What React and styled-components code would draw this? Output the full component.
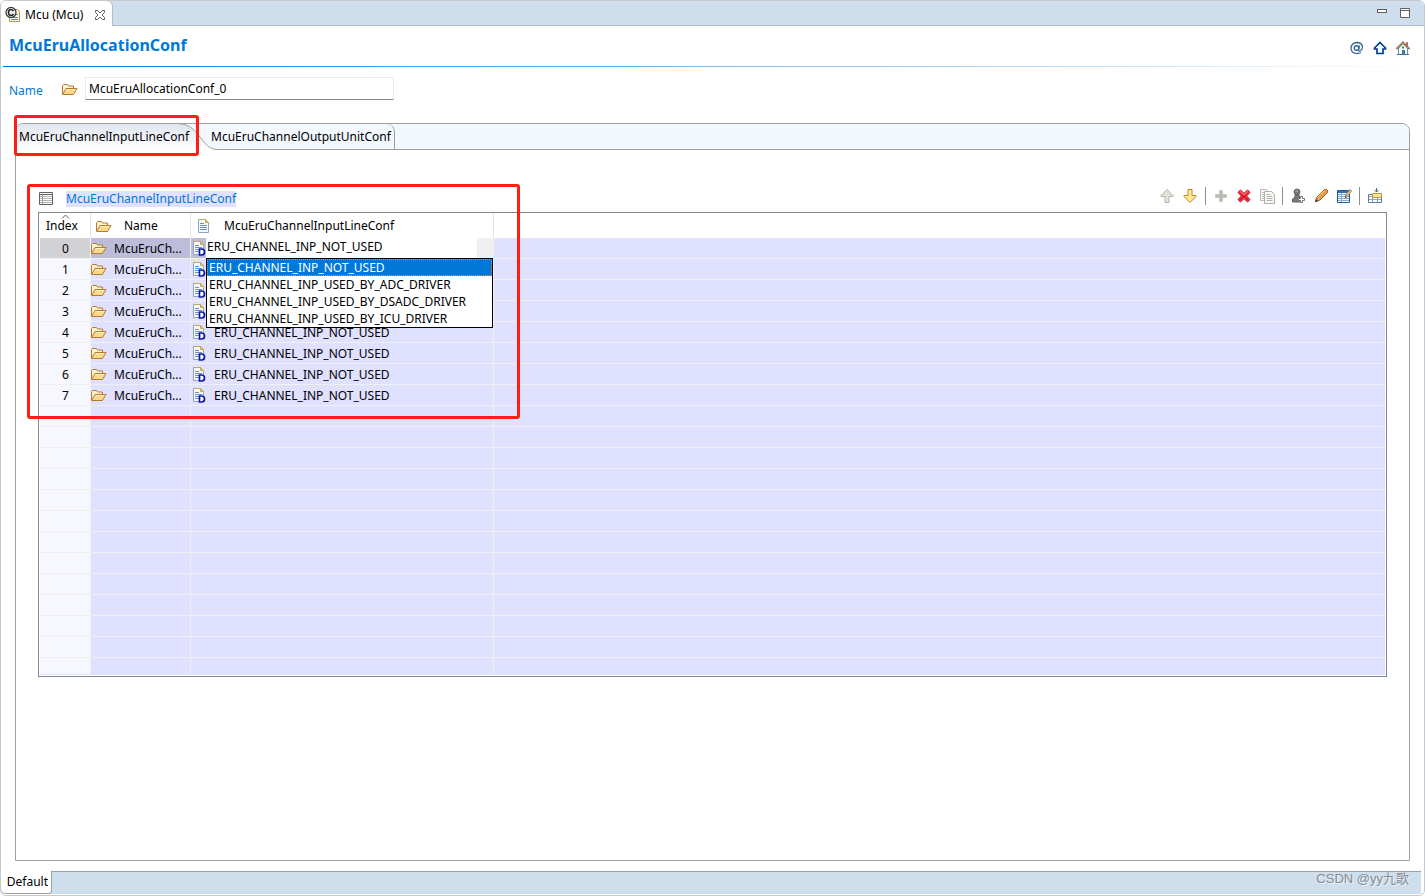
import { useState } from "react";
import styled, { createGlobalStyle } from "styled-components";

const GlobalStyle = createGlobalStyle`
  * {
    box-sizing: border-box;
  }

  body {
    margin: 0;
    background: #fff;
    color: #000;
    font-family: "Noto Sans", "Open Sans", "Noto Sans CJK SC", sans-serif;
    font-size: 12px;
    line-height: 16px;
  }

  button,
  input,
  select {
    color: inherit;
    font: inherit;
  }
`;

const Window = styled.div`
  display: flex;
  flex-direction: column;
  min-height: 100vh;
  border: 1px solid #c6c8cc;
  border-radius: 6px;
  overflow: hidden;
`;

const EditorTabs = styled.header`
  display: flex;
  justify-content: space-between;
  height: 25px;
  background: #cfdeed;
  border-bottom: 1px solid #b2bccd;
`;

const EditorTab = styled.div`
  display: flex;
  align-items: center;
  gap: 4px;
  height: 25px;
  padding: 2px 6px 0 4px;
  background: #fff;
  border-right: 1px solid #b2bccd;
  border-radius: 0 6px 0 0;
`;

const TabTitle = styled.span`
  margin-right: 7px;
`;

const IconButton = styled.button`
  display: flex;
  padding: 0;
  border: 0;
  background: none;
`;

const WindowButtons = styled.div`
  display: flex;
  align-items: center;
  gap: 9px;
  padding-right: 12px;
`;

const FormHeader = styled.div`
  display: flex;
  align-items: center;
  justify-content: space-between;
  height: 40px;
  padding: 2px 13px 4px 8px;
`;

const FormTitle = styled.h1`
  margin: 0;
  color: #0078d7;
  font-size: 16px;
  font-weight: 700;
  line-height: 20px;
`;

const FormLinks = styled.div`
  display: flex;
  gap: 7px;
  padding-top: 6px;
`;

const HeaderRule = styled.div`
  height: 1px;
  margin: 0 3px 0 2px;
  background: linear-gradient(to right, #0078d7, #fff);
`;

const NameRow = styled.div`
  display: flex;
  align-items: center;
  padding: 10px 8px 23px;
`;

const NameLabel = styled.label`
  width: 53px;
  padding-top: 4px;
  color: #0078d7;
`;

const NameInput = styled.input`
  width: 309px;
  height: 23px;
  margin-left: 7px;
  padding: 0 3px 1px;
  border: 1px solid #e8e8e8;
  border-bottom-color: #868686;
  background: #fff;
  outline: none;
`;

const Folder = styled.section`
  display: flex;
  flex: 1;
  flex-direction: column;
  margin: 0 14px 10px;
  border: 1px solid #9f9f9f;
  border-radius: 8px 8px 0 0;
`;

const FolderTabs = styled.div`
  display: flex;
  height: 26px;
  border-radius: 8px 8px 0 0;
  background: #f3f7fe;
`;

const FolderTab = styled.button`
  height: 26px;
  border: 0;
  border-right: 1px solid #9f9f9f;
  border-bottom: 1px solid #9f9f9f;
  border-radius: 0 8px 0 0;
  padding: 0 3px 0 0;
  background: transparent;
  white-space: nowrap;
`;

const ActiveTab = styled.div`
  position: relative;
  display: flex;
`;

const ActiveTabButton = styled.button`
  width: 164px;
  height: 26px;
  border: 0;
  border-radius: 8px 0 0 0;
  padding: 0 0 0 3px;
  background: linear-gradient(#dfe6f0, #fff);
  text-align: left;
  white-space: nowrap;
  overflow: visible;

  span {
    position: relative;
    z-index: 1;
  }
`;

const TabCurve = styled.svg`
  flex: none;
  width: 38px;
  height: 26px;
  margin-right: -7px;
`;

const FolderFill = styled.div`
  flex: 1;
  border-bottom: 1px solid #9f9f9f;
`;

const TabMark = styled.div`
  position: absolute;
  top: -9px;
  left: -2px;
  width: 185px;
  height: 41px;
  border: 3px solid #fd1f14;
  border-radius: 3px;
  pointer-events: none;
`;

const Panel = styled.div`
  position: relative;
  padding: 36px 22px;
`;

const PanelMark = styled.div`
  position: absolute;
  top: 34px;
  left: 11px;
  width: 493px;
  height: 235px;
  border: 3px solid #fd1f14;
  border-radius: 3px;
  pointer-events: none;
`;

const PanelHeader = styled.div`
  display: flex;
  justify-content: space-between;
  height: 26px;
`;

const PanelTitle = styled.h2`
  display: flex;
  align-items: center;
  gap: 12px;
  margin: 0;
  font-size: 12px;
  font-weight: 400;
`;

const TitleLink = styled.a`
  background: #e0e0ff;
  color: #0078d7;
  text-decoration: none;
`;

const Toolbar = styled.div`
  display: flex;
  align-items: center;
  gap: 7px;
  height: 20px;
  padding-right: 4px;
`;

const Separator = styled.span`
  width: 1px;
  height: 18px;
  background: #8c8c8c;
`;

const GridFrame = styled.div`
  border: 1px solid #828790;
  padding: 0 1px 1px;
`;

const Grid = styled.table`
  width: 100%;
  table-layout: fixed;
  border-collapse: separate;
  border-spacing: 0;
`;

const HeadCell = styled.th`
  position: relative;
  height: 25px;
  padding: 0 5px;
  border-right: 1px solid ${(props) => (props.$last ? "#fff" : "#e5e5e5")};
  font-weight: 400;
  text-align: left;
`;

const IndexHead = styled(HeadCell)`
  padding-left: 6px;
`;

const SortMark = styled.svg`
  position: absolute;
  top: 1px;
  left: 21px;
  width: 9px;
  height: 5px;
`;

const HeadLabel = styled.span`
  display: flex;
  align-items: center;
  gap: 12px;
`;

const Cell = styled.td`
  position: relative;
  height: ${(props) => (props.$short ? 17 : 21)}px;
  padding: 0;
  border-right: 1px solid ${(props) => (props.$last ? "#e0e0ff" : "#f0f0f0")};
  border-bottom: 1px solid ${(props) => (props.$short ? "#e0e0ff" : "#f0f0f0")};
  background: ${(props) => (props.$selected ? "#bdbdda" : "#e0e0ff")};
`;

const IndexCell = styled(Cell)`
  padding: 2px 0 0 1px;
  border-right-color: #f0f0f6;
  background: ${(props) => (props.$selected ? "#d2d2d6" : "#f7f7ff")};
  text-align: center;
`;

const CellContent = styled.div`
  display: flex;
  align-items: center;
  height: 20px;
  gap: 7px;
`;

const NameText = styled.span`
  padding-top: 2px;
  white-space: nowrap;
`;

const Combo = styled.div`
  position: absolute;
  top: 0;
  right: 0;
  left: 15px;
  z-index: 1;
`;

const ComboSelect = styled.select`
  display: block;
  width: 100%;
  height: 20px;
  padding: 0 1px 3px;
  appearance: none;
  border: 0;
  border-right: 16px solid #f0f0f0;
  border-radius: 0;
  background: #fff;
  outline: none;
`;

const OptionList = styled.ul`
  margin: 0;
  padding: 0;
  border: 1px solid #000;
  background: #fff;
  list-style: none;
`;

const Option = styled.li`
  height: 17px;
  padding: 0 1px;
  border: 1px dotted ${(props) => (props.$active ? "#ff8728" : "transparent")};
  background: ${(props) => (props.$active ? "#0078d7" : "#fff")};
  color: ${(props) => (props.$active ? "#fff" : "#000")};
  line-height: 15px;
  white-space: nowrap;
`;

const PageTabs = styled.footer`
  position: relative;
  display: flex;
  height: 23px;
  margin-right: 3px;
  margin-bottom: 1px;
`;

const PageTab = styled.button`
  width: 51px;
  padding: 0 3px 0 0;
  border: 0;
  border-right: 1px solid #9f9f9f;
  border-bottom: 1px solid #9f9f9f;
  border-radius: 0 0 3px 5px;
  background: #fff;
  text-align: right;
`;

const PageFill = styled.div`
  flex: 1;
  border-top: 1px solid #9f9f9f;
  background: #cfdeed;
`;

const Credit = styled.span`
  position: absolute;
  right: 12px;
  bottom: 7px;
  color: #858c94;
  font-family: "Liberation Sans", "Noto Sans CJK SC", sans-serif;
  font-size: 13px;
  text-shadow: 1px 1px 0 #eef3f8;
`;

const Icon = ({ children, size = 16 }) => (
  <svg width={size} height={size} viewBox={`0 0 ${size} ${size}`} aria-hidden="true">
    {children}
  </svg>
);

const FolderIcon = () => (
  <Icon>
    <path d="M.5 13V4.500l1-1h4l1 1.500h5V8" fill="#fdf3d0" stroke="#b47a32" />
    <path d="M.5 13.500L4 7.500h11l-3.500 6z" fill="#fbd98a" stroke="#b47a32" />
    <path d="M4.500 8.500h9" stroke="#fff0bd" />
  </Icon>
);

const PageIcon = ({ derived }) => (
  <Icon>
    <path d="M2.500 1.500h7l3 3v10h-10z" fill="#f5f9ff" stroke="#91a6bd" />
    <path d="M3 1.500h6.500l3 3v2" fill="none" stroke="#c4a955" />
    <path d="M9.500 1.500v3h3z" fill="#e6cf87" stroke="#c4a955" />
    <path d="M4 5.500h4M4 7.500h7M4 9.500h7M4 11.500h7" stroke="#6f91bb" />
    {derived && (
      <path d="M8.500 9h2q3 0 3 3t-3 3h-2z" fill="#fff" stroke="#0c18a8" strokeWidth="1.700" />
    )}
  </Icon>
);

const McuIcon = () => (
  <Icon>
    <path d="M4.500 2.500h8l2 2v10h-10v-5" fill="#fff8df" stroke="#b29653" />
    <path d="M6 10.500h7M6 12.500h7M11 7.500h2" stroke="#6585ad" />
    <circle cx="6" cy="5.500" r="5" fill="#eee" stroke="#333" strokeWidth="1.200" />
    <path d="M8.500 4Q7.500 2.500 6 2.500 3.500 2.500 3.500 5.500T6 8.500q1.500 0 2.500-1.500" fill="none" stroke="#222" strokeWidth="1.500" />
  </Icon>
);

const CloseIcon = () => (
  <Icon size={12}>
    <path d="M1.500 1.500h2L6 4l2.500-2.500h2v2L8 6l2.500 2.500v2h-2L6 8l-2.500 2.500h-2v-2L4 6 1.500 3.500z" fill="#fff" stroke="#606060" />
  </Icon>
);

const MinimizeIcon = () => (
  <Icon size={14}>
    <rect x="2.500" y="3.500" width="9" height="3" fill="#fff" stroke="#606060" />
  </Icon>
);

const MaximizeIcon = () => (
  <Icon size={14}>
    <path d="M2.500 2.500h9v9h-9z" fill="#fff" stroke="#606060" />
    <path d="M2 4.500h10" stroke="#606060" />
  </Icon>
);

const AtIcon = () => (
  <Icon>
    <circle cx="7.500" cy="8" r="2.300" fill="none" stroke="#39699b" strokeWidth="1.400" />
    <path d="M10.500 5.500L9.500 10q0 1.500 1.500 1 2.500-1.500 2.500-4Q13 2.500 8 2.500q-6 .5-6 6Q2.500 13.500 8 13.500q2 0 4-1" fill="none" stroke="#39699b" strokeWidth="1.300" />
  </Icon>
);

const HomeUpIcon = () => (
  <Icon>
    <path d="M8 2.500L13.500 8v1H11v4.500H5V9H2.500V8z" fill="#f4fbff" stroke="#003e91" strokeWidth="1.700" />
  </Icon>
);

const HouseIcon = () => (
  <Icon>
    <path d="M11.500 2.500h1V6h-1z" fill="#e38a65" stroke="#b0704c" />
    <path d="M3.500 8L8 3.500 12.500 8v6.500h-9z" fill="#f4f8ff" stroke="#6c8cae" />
    <path d="M1.500 9L8 2.500 14.500 9" fill="none" stroke="#8b6a4c" strokeWidth="2" />
    <path d="M2 8.500L8 2.500l6 6" fill="none" stroke="#dfc9a6" strokeDasharray="1.500 1.500" />
    <path d="M7.500 10.500h2v4h-2z" fill="#3f9a63" stroke="#3d6a80" />
    <path d="M7 6.500h2v2H7z" fill="#3a9358" />
    <path d="M2 14.500h12" stroke="#3e71a6" />
  </Icon>
);

const ListIcon = () => (
  <Icon>
    <path d="M1.500 1.500h13v12h-13z" fill="#fff" stroke="#606060" />
    <path d="M2 3.500h12" stroke="#606060" />
    <path d="M4.500 4v9" stroke="#8c8c8c" />
    <path d="M2 5.500h12M2 7.500h12M2 9.500h12M2 11.500h12" stroke="#b4b4b4" />
  </Icon>
);

const ArrowIcon = ({ down, fill, stroke }) => (
  <Icon>
    <path
      d={down ? "M6 1.500h4v6h4v1L8 14.500 2 8.500v-1h4z" : "M6 14.500h4v-6h4v-1L8 1.500 2 7.500v1h4z"}
      fill={fill}
      stroke={stroke}
    />
  </Icon>
);

const PlusIcon = () => (
  <Icon>
    <path d="M6.500 2.500h3v4h4v3h-4v4h-3v-4h-4v-3h4z" fill="#b7b9b2" stroke="#c6c8c1" />
  </Icon>
);

const DeleteIcon = () => (
  <Icon>
    <path d="M2 4l2-2h1l3 3 3-3h1l2 2v1L11 8l3 3v1l-2 2h-1l-3-3-3 3H4l-2-2v-1l3-3-3-3z" fill="#ee3e4a" stroke="#d9606a" />
    <path d="M3.500 4.500l9 8M12.500 3.500l-9 9" stroke="#d8101f" strokeWidth="1.500" />
    <path d="M4 3.500l4 3.500 4-3.500" fill="none" stroke="#ff8e95" />
  </Icon>
);

const CopyIcon = () => (
  <Icon>
    <path d="M1.500 1.500h6l2 2v9h-8z" fill="#f8f8f5" stroke="#bbbbb5" />
    <path d="M3 4.500h2M3 6.500h2M3 8.500h2M3 10.500h2" stroke="#bbbbb5" />
    <path d="M5.500 3.500h7l3 3v9h-10z" fill="#f8f8f5" stroke="#b0b0aa" />
    <path d="M7.500 6.500h4M7.500 8.500h6M7.500 10.500h6M7.500 12.500h6" stroke="#b5b5b0" />
  </Icon>
);

const PawnIcon = () => (
  <Icon>
    <circle cx="7" cy="4" r="3" fill="#777" stroke="#666" />
    <path d="M5 7h4l1 4 1 3H2.500v-3L5 9z" fill="#777" stroke="#666" />
    <path d="M5.500 3q1.500-1 2 1" fill="none" stroke="#b5b5b5" />
    <path d="M10.500 8.500h2v2h2v2h-2v2h-2v-2h-2v-2h2z" fill="#fff" stroke="#777" />
  </Icon>
);

const PencilIcon = () => (
  <Icon>
    <path d="M2.500 13.500l1-4 8-8h2l1 1v2l-8 8z" fill="#e99c48" stroke="#a75b20" />
    <path d="M4.500 9.500l7-7" stroke="#ffd39b" />
    <path d="M2 14l1-3 2 2z" fill="#27364f" />
  </Icon>
);

const EditTableIcon = () => (
  <Icon>
    <path d="M1.500 2.500h12v12h-12z" fill="#f5faff" stroke="#245d91" />
    <path d="M2 4h11" stroke="#2f72b5" strokeWidth="2" />
    <path d="M2 6.500h11M2 8.500h11M2 10.500h11M2 12.500h11M5.500 5v9" stroke="#87abc9" />
    <path d="M9.500 9.500l.5-3 4-5 1.500 1.500-4 5z" fill="#f3c89a" stroke="#a17854" />
    <path d="M9 10l.5-1.500L11 9.500z" fill="#333" />
  </Icon>
);

const InsertRowIcon = () => (
  <Icon>
    <path d="M9.500 0v4M7.500 2l2 2 2-2" fill="none" stroke="#466880" />
    <path d="M1.500 6.500h13v8h-13z" fill="#fff" stroke="#557a9d" />
    <path d="M2 8.500h3M2 11.500h12M5.500 9v5M10.500 9v5" stroke="#8ba6bf" />
    <path d="M5.500 5.500h9v4h-9z" fill="#ffe7a2" stroke="#c8902e" />
  </Icon>
);

const tools = [
  { label: "Move up", icon: <ArrowIcon fill="#e2e2dc" stroke="#b5b5ad" /> },
  { label: "Move down", icon: <ArrowIcon down fill="#ffe99a" stroke="#bd8612" /> },
  null,
  { label: "Add", icon: <PlusIcon /> },
  { label: "Delete", icon: <DeleteIcon /> },
  { label: "Duplicate", icon: <CopyIcon /> },
  null,
  { label: "Add user value", icon: <PawnIcon /> },
  { label: "Edit", icon: <PencilIcon /> },
  { label: "Edit table", icon: <EditTableIcon /> },
  null,
  { label: "Insert row", icon: <InsertRowIcon /> },
];

const options = [
  "ERU_CHANNEL_INP_NOT_USED",
  "ERU_CHANNEL_INP_USED_BY_ADC_DRIVER",
  "ERU_CHANNEL_INP_USED_BY_DSADC_DRIVER",
  "ERU_CHANNEL_INP_USED_BY_ICU_DRIVER",
];

const rows = [0, 1, 2, 3, 4, 5, 6, 7];
const emptyRows = Array.from({ length: 13 }, (_, i) => i);

const ValueCombo = () => {
  const [value, setValue] = useState(options[0]);

  return (
    <Combo>
      <ComboSelect
        aria-label="McuEruChannelInputLineConf 0"
        value={value}
        onChange={(e) => setValue(e.target.value)}
      >
        {options.map((option) => (
          <option key={option}>{option}</option>
        ))}
      </ComboSelect>
      <OptionList role="listbox">
        {options.map((option) => (
          <Option
            key={option}
            role="option"
            aria-selected={option === value}
            $active={option === value}
            onClick={() => setValue(option)}
          >
            {option}
          </Option>
        ))}
      </OptionList>
    </Combo>
  );
};

const ChannelTable = () => (
  <GridFrame>
    <Grid>
      <colgroup>
        <col style={{ width: 51 }} />
        <col style={{ width: 100 }} />
        <col style={{ width: 303 }} />
        <col />
      </colgroup>
      <thead>
        <tr>
          <IndexHead>
            <SortMark viewBox="0 0 9 5">
              <path d="M1 4.500l3.500-3.500L8 4.500" fill="none" stroke="#606060" />
            </SortMark>
            Index
          </IndexHead>
          <HeadCell>
            <HeadLabel>
              <FolderIcon />
              Name
            </HeadLabel>
          </HeadCell>
          <HeadCell>
            <HeadLabel>
              <PageIcon />
              McuEruChannelInputLineConf
            </HeadLabel>
          </HeadCell>
          <HeadCell $last />
        </tr>
      </thead>
      <tbody>
        {rows.map((row) => (
          <tr key={row}>
            <IndexCell $selected={row === 0}>{row}</IndexCell>
            <Cell $selected={row === 0}>
              <CellContent>
                <FolderIcon />
                <NameText>McuEruCh...</NameText>
              </CellContent>
            </Cell>
            <Cell $selected={row === 0}>
              <CellContent>
                <PageIcon derived />
                {row > 0 && <NameText>{options[0]}</NameText>}
              </CellContent>
              {row === 0 && <ValueCombo />}
            </Cell>
            <Cell $last />
          </tr>
        ))}
        {emptyRows.map((row) => (
          <tr key={row}>
            <IndexCell $short={row === 12} />
            <Cell $short={row === 12} />
            <Cell $short={row === 12} />
            <Cell $short={row === 12} $last />
          </tr>
        ))}
      </tbody>
    </Grid>
  </GridFrame>
);

const App = () => {
  const [name, setName] = useState("McuEruAllocationConf_0");

  return (
    <>
      <GlobalStyle />
      <Window>
        <EditorTabs>
          <EditorTab>
            <McuIcon />
            <TabTitle>Mcu (Mcu)</TabTitle>
            <IconButton aria-label="Close">
              <CloseIcon />
            </IconButton>
          </EditorTab>
          <WindowButtons>
            <IconButton aria-label="Minimize">
              <MinimizeIcon />
            </IconButton>
            <IconButton aria-label="Maximize">
              <MaximizeIcon />
            </IconButton>
          </WindowButtons>
        </EditorTabs>
        <FormHeader>
          <FormTitle>McuEruAllocationConf</FormTitle>
          <FormLinks>
            <IconButton aria-label="Annotations">
              <AtIcon />
            </IconButton>
            <IconButton aria-label="Up">
              <HomeUpIcon />
            </IconButton>
            <IconButton aria-label="Home">
              <HouseIcon />
            </IconButton>
          </FormLinks>
        </FormHeader>
        <HeaderRule />
        <NameRow>
          <NameLabel htmlFor="name">Name</NameLabel>
          <FolderIcon />
          <NameInput id="name" value={name} onChange={(e) => setName(e.target.value)} />
        </NameRow>
        <Folder>
          <FolderTabs>
            <ActiveTab>
              <ActiveTabButton>
                <span>McuEruChannelInputLineConf</span>
              </ActiveTabButton>
              <TabCurve viewBox="0 0 38 26">
                <defs>
                  <linearGradient id="tab" x1="0" y1="0" x2="0" y2="1">
                    <stop offset="0" stopColor="#dfe6f0" />
                    <stop offset="1" stopColor="#fff" />
                  </linearGradient>
                </defs>
                <path d="M0 0C10 0 15 7 20 13S28 25.500 38 25.500V26H0z" fill="url(#tab)" />
                <path d="M0 0C10 0 15 7 20 13S28 25.500 38 25.500" fill="none" stroke="#9f9f9f" />
              </TabCurve>
              <TabMark />
            </ActiveTab>
            <FolderTab>McuEruChannelOutputUnitConf</FolderTab>
            <FolderFill />
          </FolderTabs>
          <Panel>
            <PanelHeader>
              <PanelTitle>
                <ListIcon />
                <TitleLink href="#channels">McuEruChannelInputLineConf</TitleLink>
              </PanelTitle>
              <Toolbar>
                {tools.map((tool, i) =>
                  tool ? (
                    <IconButton key={tool.label} aria-label={tool.label}>
                      {tool.icon}
                    </IconButton>
                  ) : (
                    <Separator key={i} />
                  )
                )}
              </Toolbar>
            </PanelHeader>
            <ChannelTable />
            <PanelMark />
          </Panel>
        </Folder>
        <PageTabs>
          <PageTab>Default</PageTab>
          <PageFill />
          <Credit>CSDN @yy九歌</Credit>
        </PageTabs>
      </Window>
    </>
  );
};

export default App;
